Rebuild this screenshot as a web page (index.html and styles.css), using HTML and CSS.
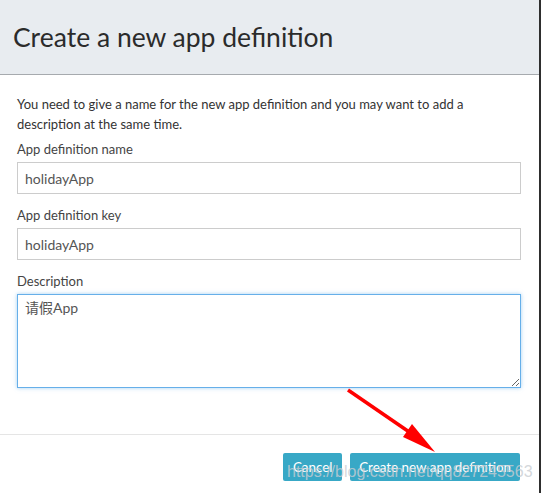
FILE: index.html
```html
<!DOCTYPE html>
<html lang="en">
<head>
  <meta charset="UTF-8" />
  <title>Create a new app definition</title>
  <link rel="stylesheet" href="styles.css">
</head>
<body>
  <div class="modal">
    <div class="modal-header">
      <h2>Create a new app definition</h2>
    </div>
    <div class="modal-body">
      <p>You need to give a name for the new app definition and you may want to add a description at the same time.</p>
      <div class="form-group">
        <label>App definition name</label>
        <input class="form-control" type="text" value="holidayApp">
      </div>
      <div class="form-group">
        <label>App definition key</label>
        <input class="form-control" type="text" value="holidayApp">
      </div>
      <div class="form-group">
        <label>Description</label>
        <textarea class="form-control focused" rows="4">请假App</textarea>
      </div>
    </div>
    <div class="modal-footer">
      <button class="btn">Cancel</button>
      <button class="btn">Create new app definition</button>
    </div>

    <!-- annotation drawn on top of the screenshot -->
    <svg class="arrow" width="541" height="493" viewBox="0 0 541 493">
      <line x1="348" y1="390" x2="418" y2="438" stroke="#ff0000" stroke-width="3.5" />
      <polygon points="435,452 403,437 412,424" fill="#ff0000" />
    </svg>
    <div class="watermark">https://blog.csdn.net/qq827245563</div>
  </div>
</body>
</html>
```

FILE: styles.css
```css
body { margin: 0; background: #2e2e2e; font-family: Lato, "Noto Sans CJK SC", sans-serif; color: #333; }
.modal { position: relative; width: 539px; height: 493px; background: #fff; overflow: hidden; }

.modal-header { height: 74px; background: #e8ecf0; border-bottom: 1px solid #a6aaae; display: flex; align-items: center; padding-left: 13px; }
.modal-header h2 { margin: 0; font-size: 26.5px; font-weight: normal; color: #2b2b2b; padding-bottom: 1px; }

.modal-body { padding: 19px 18px 46px 17px; font-size: 13px; }
.modal-body p { margin: 0 0 6px 0; line-height: 20px; }

.form-group { margin-bottom: 12px; }
.form-group:last-child { margin-bottom: 0; }
.form-group label { display: block; line-height: 19px; margin-bottom: 3px; color: #444; }

.form-control { display: block; width: 100%; box-sizing: border-box; height: 32px; padding: 5px 7px; border: 1px solid #ccc; font-family: Lato, "Noto Sans CJK SC", sans-serif; font-size: 14px; color: #555; background: #fff; border-radius: 0; outline: none; }
textarea.form-control { height: 94px; resize: both; line-height: 20px; padding-top: 3px; }
.form-control.focused { border-color: #66afe9; box-shadow: 0 0 4px rgba(102, 175, 233, 0.6); }

.modal-footer { border-top: 1px solid #e5e5e5; padding: 18px 19px 0 0; display: flex; justify-content: flex-end; gap: 8px; }
.btn { height: 28px; min-width: 59px; padding: 0 9px; border: none; border-radius: 2px; background: #38a8c6; color: #fff; font-family: Lato, sans-serif; font-size: 13.4px; cursor: pointer; }

.arrow { position: absolute; left: 0; top: 0; pointer-events: none; }
.watermark { position: absolute; left: 287px; top: 463px; font-family: "Liberation Sans", Arial, sans-serif; font-size: 16px; color: rgba(200, 205, 210, 0.8); pointer-events: none; white-space: nowrap; }
```
